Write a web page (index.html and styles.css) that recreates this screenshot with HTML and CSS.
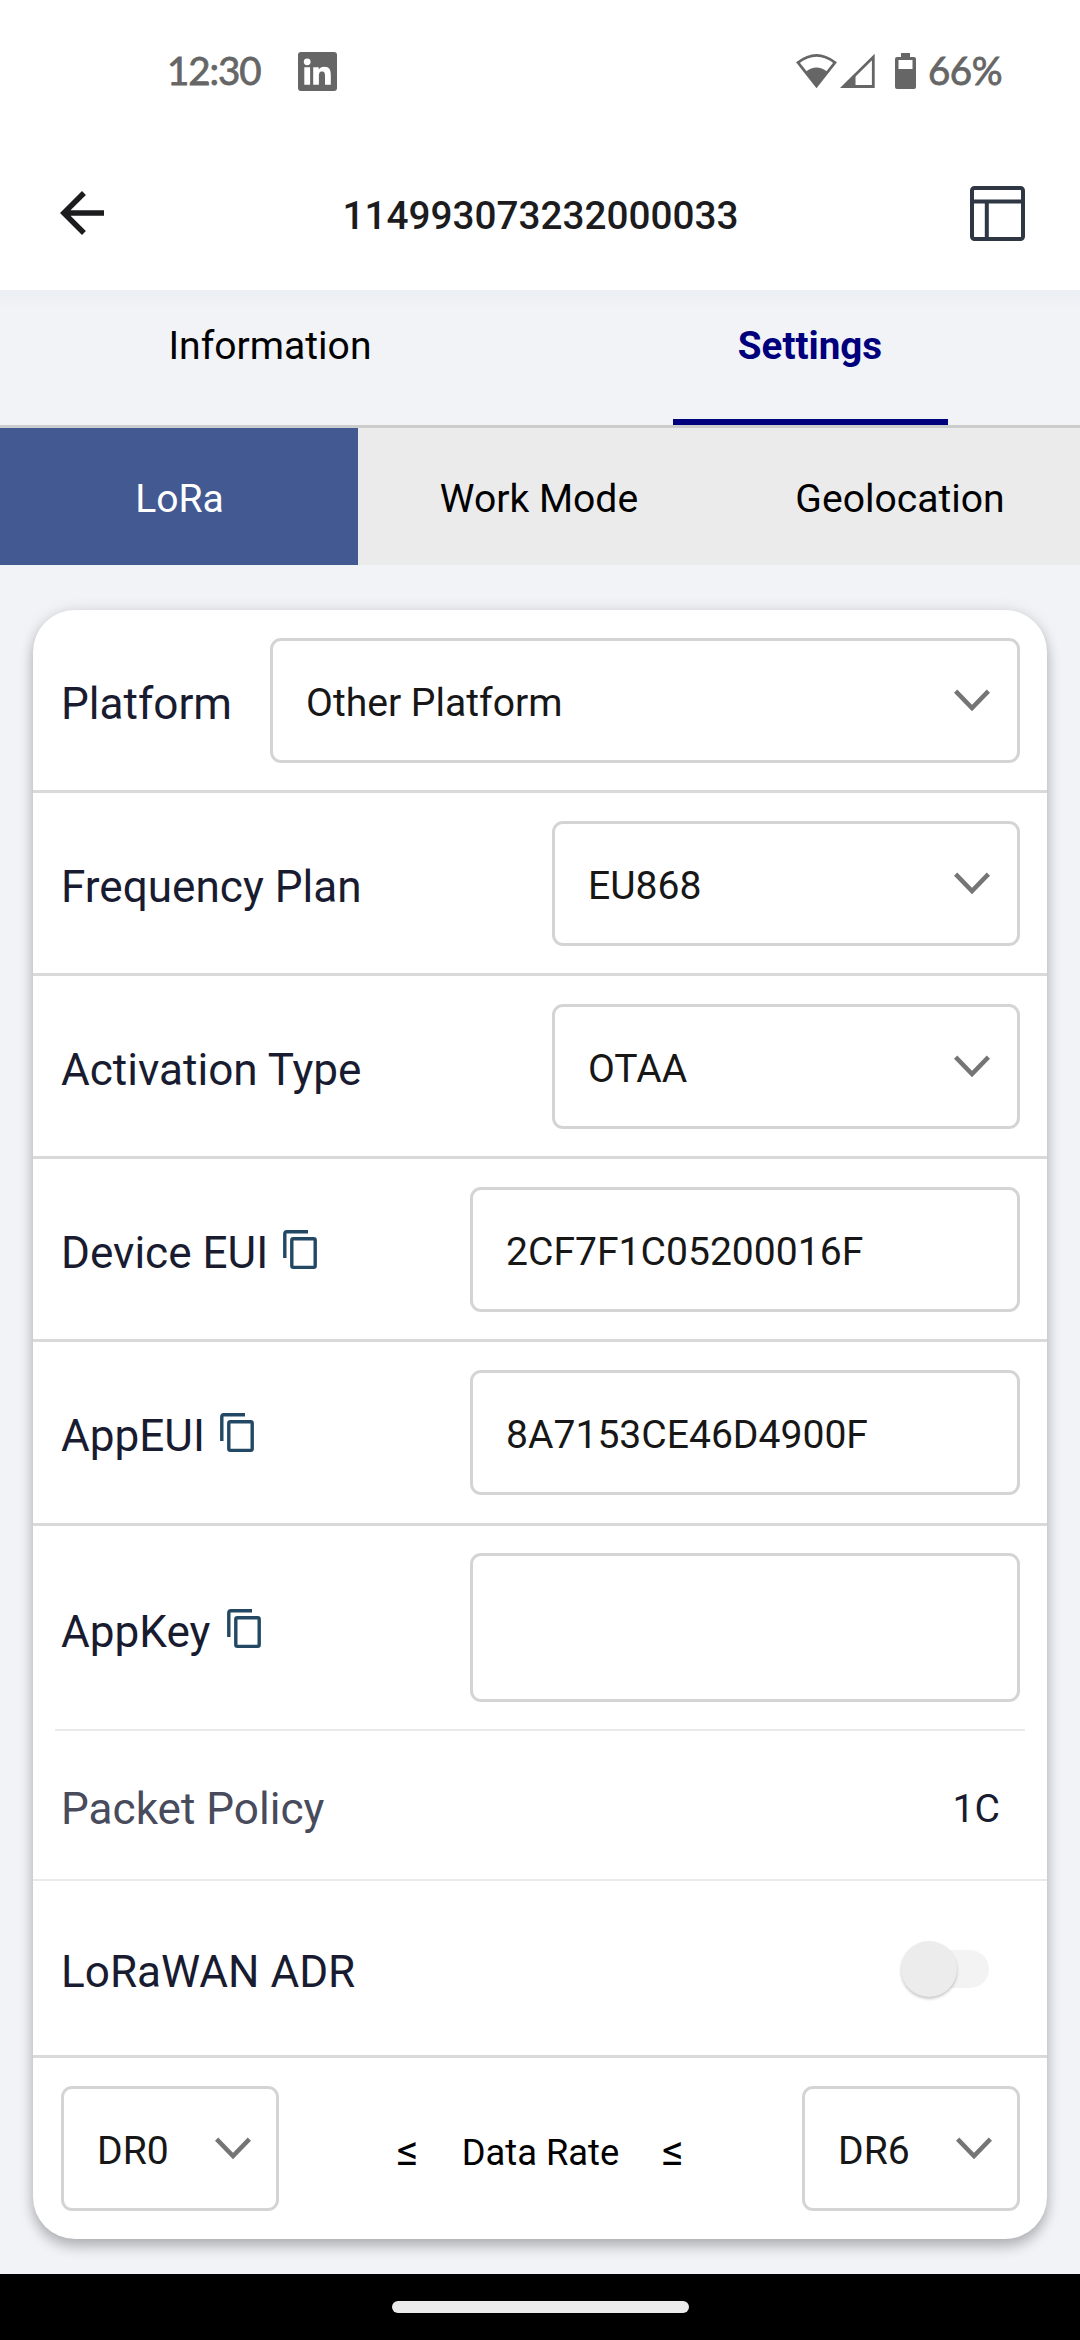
FILE: index.html
```html
<!DOCTYPE html>
<html lang="en">
<head>
<meta charset="utf-8">
<title>Device settings</title>
<link rel="stylesheet" href="styles.css">
</head>
<body>
<svg class="sprite" width="0" height="0" aria-hidden="true">
  <symbol id="chevron" viewBox="0 0 36 24"><path d="M1.6 2.2 18 19 34.4 2.2" fill="none" stroke="#757575" stroke-width="4.6"/></symbol>
  <symbol id="copy" viewBox="0 0 34 40"><path d="M1.8 28V3.8Q1.8 1.8 3.8 1.8H25" fill="none" stroke="#224863" stroke-width="3.4"/><rect x="8.8" y="8.8" width="23.4" height="28.6" rx="1.6" fill="none" stroke="#224863" stroke-width="3.4"/></symbol>
</svg>
<div class="screen">
  <div class="status">
    <span class="clock">12:30</span>
    <svg class="linkedin" viewBox="0 0 39 39"><rect width="39" height="39" rx="3" fill="#666"/><circle cx="9.2" cy="9.8" r="3.4" fill="#fff"/><path d="M6.3 15.2h5.8v17.6H6.3zM15.2 15.2h5.5v2.4c1-1.7 3-2.9 5.6-2.9 5.2 0 6.5 3.3 6.5 8.3v9.8H27v-9c0-2.300-.4-4.300-3-4.300s-3.100 2-3.100 4.300v9h-5.700z" fill="#fff"/></svg>
    <div class="signals">
      <svg width="41" height="36" viewBox="0 0 41 36"><path d="M2 9.600Q20.500-4.800 39 9.600L20.500 33Z" fill="none" stroke="#666" stroke-width="2.800"/><path d="M10 18.500Q20.500 10.500 31 18.500L20.500 33Z" fill="#666"/></svg>
      <svg class="cell" width="35" height="36" viewBox="0 0 35 36"><path d="M3.400 33.500H33.300V4Z" fill="none" stroke="#666" stroke-width="2.800"/><path d="M1 34.500 15.500 20V34.500Z" fill="#666"/></svg>
      <svg class="battery" width="21" height="36" viewBox="0 0 21 36"><path fill-rule="evenodd" d="M6 0h9v4h4q2 0 2 2v28q0 2-2 2H2q-2 0-2-2V6q0-2 2-2h4zM3.500 7v9h14V7z" fill="#666"/></svg>
      <span class="percent">66%</span>
    </div>
  </div>
  <header class="appbar">
    <svg class="back" viewBox="0 0 24 24"><path d="M20 11H7.830l5.590-5.590L12 4l-8 8 8 8 1.410-1.410L7.830 13H20z" fill="#1c1c1e"/></svg>
    <h1>114993073232000033</h1>
    <svg class="panel" viewBox="0 0 55 55"><rect x="2" y="2" width="51" height="51" rx="2.500" fill="none" stroke="#2f3744" stroke-width="4"/><path d="M2 15.500H53M16.800 15.500V53" fill="none" stroke="#2f3744" stroke-width="4"/></svg>
  </header>
  <nav class="tabs"><div class="tab">Information</div><div class="tab active"><span>Settings</span></div></nav>
  <nav class="segments"><div class="segment on">LoRa</div><div class="segment">Work Mode</div><div class="segment">Geolocation</div></nav>
  <main>
    <section class="card">
      <div class="row"><span class="label">Platform</span><div class="field wide">Other Platform<svg class="chev"><use href="#chevron"/></svg></div></div>
      <div class="row"><span class="label">Frequency Plan</span><div class="field mid">EU868<svg class="chev"><use href="#chevron"/></svg></div></div>
      <div class="row"><span class="label">Activation Type</span><div class="field mid">OTAA<svg class="chev"><use href="#chevron"/></svg></div></div>
      <div class="row"><span class="label">Device EUI</span><svg class="copy"><use href="#copy"/></svg><div class="field input">2CF7F1C05200016F</div></div>
      <div class="row eui"><span class="label">AppEUI</span><svg class="copy"><use href="#copy"/></svg><div class="field input">8A7153CE46D4900F</div></div>
      <div class="row key"><span class="label">AppKey</span><svg class="copy"><use href="#copy"/></svg><div class="field input"></div></div>
      <div class="row policy"><span class="label">Packet Policy</span><span class="value">1C</span></div>
      <div class="row adr"><span class="label">LoRaWAN ADR</span><div class="switch"><div class="thumb"></div></div></div>
      <div class="row rate"><div class="field small">DR0<svg class="chev"><use href="#chevron"/></svg></div><div class="range"><span class="le">≤</span><span>Data Rate</span><span class="le">≤</span></div><div class="field small">DR6<svg class="chev"><use href="#chevron"/></svg></div></div>
    </section>
  </main>
  <footer class="navbar"><div class="pill"></div></footer>
</div>
</body>
</html>
```
FILE: styles.css
```css
* { box-sizing: border-box; }
body { margin: 0; font-family: Roboto, sans-serif; font-size: 39.1px; color: #000; }
.sprite { display: block; }
svg { flex: none; display: block; }
.screen { width: 1080px; height: 2340px; display: flex; flex-direction: column; background: #f1f3f7; overflow: hidden; }
.status { height: 142px; background: #fff; display: flex; align-items: center; padding: 0 78px 0 167px; color: #666; }
.clock, .percent { font-family: Lato, Roboto, sans-serif; font-weight: 400; font-size: 38.5px; line-height: 46px; padding-bottom: 2px; -webkit-text-stroke: 0.8px #666; }
.clock { width: 131px; letter-spacing: -1.1px; }
.linkedin { width: 39px; height: 39px; }
.signals { margin-left: auto; display: flex; align-items: center; }
.cell { margin-left: 3px; }
.battery { margin: 0 12px 0 20px; }
.percent { width: 74px; letter-spacing: -0.5px; white-space: nowrap; }
.appbar { height: 148px; background: #fff; display: grid; grid-template-columns: 66px 1fr 55px; align-items: start; padding: 38px 55px 0 49px; }
.back { width: 66px; height: 66px; }
.appbar h1 { margin: 13px 0 0; padding-right: 4px; font-size: 38.7px; line-height: 46px; font-weight: 500; text-align: center; color: #1c1c1e; }
.panel { width: 55px; height: 55px; margin-top: 6px; }
.tabs { height: 138px; display: grid; grid-template-columns: 1fr 1fr; border-bottom: 3px solid #ccc; background: linear-gradient(#ebeef2, #f1f3f7 20px); }
.tab { display: flex; justify-content: center; padding-top: 33px; line-height: 46px; }
.active span { width: 275px; text-align: center; color: #00007c; font-size: 38.6px; font-weight: 700; border-bottom: 6px solid #00007c; height: 102px; }
.segments { height: 137px; display: grid; grid-template-columns: 358px 361px 361px; background: #ebebeb; }
.segment { display: flex; align-items: center; justify-content: center; padding: 4px 0 0 1px; }
.on { background: #425992; color: #fff; }
main { flex: 1; padding: 45px 33px 0; }
.card { height: 1629px; background: #fff; border-radius: 42px; box-shadow: 0 8px 13px rgba(0,0,0,.23), 0 0 15px rgba(0,0,0,.1); }
.row { height: 183px; border-bottom: 3px solid #d9d9d9; display: flex; align-items: center; padding: 0 27px 0 28px; }
.label { font-size: 44.1px; line-height: 52px; padding-top: 7px; color: #191c30; white-space: nowrap; }
.copy { width: 34px; height: 40px; margin-left: 15px; margin-top: 1px; }
.field { height: 125px; margin-left: auto; border: 3px solid #d4d4d4; border-radius: 11px; padding: 5px 27px 0 33px; display: flex; align-items: center; justify-content: space-between; color: #171717; white-space: nowrap; }
.chev { width: 36px; height: 24px; margin-bottom: 4px; }
.wide { width: 750px; }
.mid { width: 468px; }
.input { width: 550px; }
.eui { height: 184px; }
.key { height: 205px; margin: 0 22px; padding: 0 5px 0 6px; border-bottom: 2px solid #eaeaea; }
.key .label { padding-top: 9px; }
.key .copy { margin-top: 3px; margin-left: 17px; }
.key .field { height: 149px; }
.policy { height: 150px; border-bottom: 2px solid #eaeaea; justify-content: space-between; padding-right: 47px; }
.policy .label { color: #484b5b; }
.value { color: #191c30; padding-top: 7px; }
.adr { height: 177px; justify-content: space-between; padding-right: 58px; }
.switch { width: 75px; height: 38px; margin-top: 1px; border-radius: 19px; background: #f3f3f3; display: flex; align-items: center; }
.thumb { width: 56px; height: 56px; flex: none; margin-left: -13px; border-radius: 50%; background: #ececec; box-shadow: 0 2px 3px rgba(0,0,0,.22); }
.rate { height: 181px; border: 0; }
.small { width: 218px; margin: 0; padding-right: 25px; }
.range { flex: 1; display: flex; justify-content: center; align-items: baseline; gap: 43px; font-size: 36.3px; padding-top: 3px; }
.le { font-size: 43px; }
.navbar { height: 66px; background: #000; display: flex; justify-content: center; padding-top: 27px; }
.pill { width: 297px; height: 12px; border-radius: 6px; background: #ebebeb; }
```
